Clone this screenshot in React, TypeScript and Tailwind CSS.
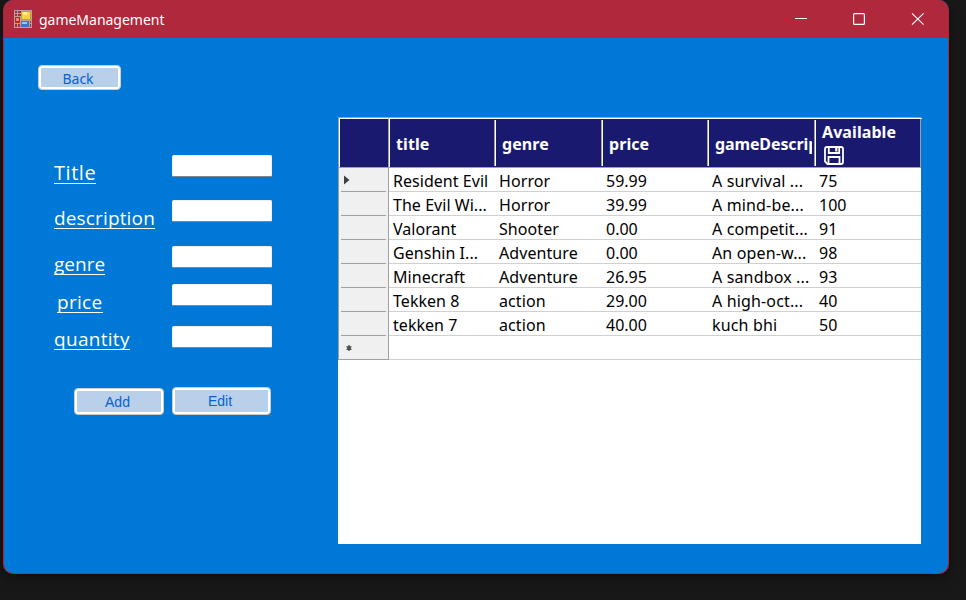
import React from "react";

const rows = [
  ["Resident Evil", "Horror", "59.99", "A survival ...", "75"],
  ["The Evil Wi...", "Horror", "39.99", "A mind-be...", "100"],
  ["Valorant", "Shooter", "0.00", "A competit...", "91"],
  ["Genshin I...", "Adventure", "0.00", "An open-w...", "98"],
  ["Minecraft", "Adventure", "26.95", "A sandbox ...", "93"],
  ["Tekken 8", "action", "29.00", "A high-oct...", "40"],
  ["tekken 7", "action", "40.00", "kuch bhi", "50"],
  ["", "", "", "", ""],
];

const columns = "grid grid-cols-[106px_107px_106px_107px_106px]";

const fields = [
  { label: "Title", row: "h-[45px]", text: "mt-[7px] w-[42px] text-[20px] tracking-[0.55px]", indent: "ml-0" },
  { label: "description", row: "h-[46px]", text: "mt-[7px] w-[101px] text-[19px] tracking-[0.15px]", indent: "ml-0" },
  { label: "genre", row: "h-[38px]", text: "mt-[7px] w-[51px] text-[19px]", indent: "ml-0" },
  { label: "price", row: "h-[42px]", text: "mt-[7px] w-[46px] text-[19px] tracking-[0.3px]", indent: "ml-[3px]" },
  { label: "quantity", row: "h-[61px]", text: "mt-[2px] w-[76px] text-[19px] tracking-[0.3px]", indent: "ml-0" },
];

const cellTracking = ["tracking-[0.04px]", "tracking-[0.08px]", "tracking-normal", "tracking-[0.15px]", "tracking-normal"];

function AppIcon() {
  return (
    <svg width="18" height="18" viewBox="0 0 18 18" shapeRendering="crispEdges">
      <rect width="18" height="18" fill="#b9a0a0" />
      <rect x="1" y="1" width="2" height="2" fill="#b0283b" />
      <rect x="4" y="1" width="3" height="2" fill="#b0283b" />
      <rect x="1" y="4" width="2" height="2" fill="#b0283b" />
      <rect x="4" y="4" width="3" height="2" fill="#b0283b" />
      <rect x="1" y="7" width="5" height="6" fill="#b8271f" />
      <rect x="2" y="8" width="3" height="3" fill="#ee8478" />
      <rect x="7" y="1" width="10" height="9" fill="#d79b18" />
      <rect x="8" y="2" width="8" height="7" fill="#fbd044" />
      <rect x="9" y="2" width="4" height="3" fill="#ffeb9b" />
      <rect x="1" y="14" width="2" height="3" fill="#b0283b" />
      <rect x="4" y="14" width="2" height="3" fill="#b0283b" />
      <rect x="7" y="11" width="8" height="6" fill="#3b75d6" />
      <rect x="8" y="12" width="5" height="2" fill="#9cc5ff" />
      <rect x="16" y="11" width="1" height="2" fill="#b0283b" />
      <rect x="16" y="14" width="1" height="3" fill="#b0283b" />
    </svg>
  );
}

function SaveIcon() {
  return (
    <svg width="20" height="19" viewBox="0 0 20 19" fill="none" stroke="#fff" strokeWidth="1.8">
      <path d="M3 1H17Q19 1 19 3V16Q19 18 17 18H3.5L1 15.5V3Q1 1 3 1Z" />
      <path d="M4.8 1V7H15.2V1" />
      <path d="M4.5 18V11H15.5V18" />
      <path d="M12.3 2V5.5" strokeWidth="2.2" />
    </svg>
  );
}

function FormButton({ children, className }: { children: React.ReactNode; className: string }) {
  return (
    <button
      className={`flex items-center justify-center rounded-[4px] border border-[#d0cdc9] bg-[#b9d0ea] text-[#0862cd] shadow-[inset_0_0_0_2px_#fff] ${className}`}
    >
      {children}
    </button>
  );
}

function HeaderCell({ children, className = "" }: { children: React.ReactNode; className?: string }) {
  return (
    <div className="flex h-[48px] pt-[1px]">
      <div className="h-[48px] w-[104px] shrink-0 overflow-hidden whitespace-nowrap pl-[6px]">
        <div className={`w-[97px] overflow-hidden leading-[48px] ${className}`}>{children}</div>
      </div>
      <div className="ml-auto h-[46px] w-[2px] shrink-0 border-l border-[#a0a0a0] bg-white" />
    </div>
  );
}

export default function App() {
  return (
    <div className="h-[600px] w-[966px] overflow-hidden bg-[#181818] pl-[3px] font-['Noto_Sans','Open_Sans',sans-serif]">
      <div className="flex h-[574px] w-[946px] flex-col overflow-hidden rounded-[10px] border-x border-b border-[#b0283b] bg-[#0078d7] shadow-[0_4px_14px_rgba(0,0,0,0.4)]">
        <header className="flex h-[38px] shrink-0 items-center bg-[#b0283b] pl-[10px] text-white">
          <AppIcon />
          <span className="ml-[7px] mt-[2px] text-[14px] leading-5 tracking-[-0.02px]">gameManagement</span>
          <svg className="ml-auto mr-[22px]" width="132" height="14" viewBox="0 0 132 14" fill="none" stroke="#fff">
            <path d="M1 6.5H13" />
            <rect x="59.6" y="1.6" width="10.8" height="10.8" rx="1" strokeWidth="1.2" />
            <path d="M118 1.3L129.6 12.7M129.6 1.3L118 12.7" strokeWidth="1.1" />
          </svg>
        </header>

        <main className="flex min-h-0 flex-1">
          <section className="w-[334px] shrink-0 pt-[27px]">
            <FormButton className="ml-[34px] h-[25px] w-[83px] pr-[3px] pt-[2px] font-['Noto_Sans'] text-[14px] leading-4">
              Back
            </FormButton>
            <div className="mt-[65px] pl-[50px]">
              {fields.map((f) => (
                <div key={f.label} className={`flex ${f.row}`}>
                  <div className="w-[118px] shrink-0">
                    <div
                      className={`h-[22px] whitespace-nowrap border-b border-[#ffffee] font-['Open_Sans'] font-medium leading-[22px] text-[#ffffee] ${f.text} ${f.indent}`}
                    >
                      {f.label}
                    </div>
                  </div>
                  <input className="h-[22px] w-[100px] rounded-[2px] border border-[#f0f0f0] border-b-[#868686] bg-white outline-none" />
                </div>
              ))}
            </div>
            <div className="flex items-start pl-[70px] font-['Liberation_Sans'] text-[14px]">
              <FormButton className="mt-[1px] h-[27px] w-[90px] pr-[3px] pt-[1px]">Add</FormButton>
              <FormButton className="ml-[8px] h-[28px] w-[99px] pr-[3px]">Edit</FormButton>
            </div>
          </section>

          <section className="mt-[79px] h-[427px] w-[583px] bg-white text-black">
            <div className="flex h-[51px] border border-[#a0a0a0] bg-[#191970] text-[16px] font-bold leading-[23px] tracking-[0.08px] text-white">
              <div className="w-[50px] shrink-0 border-l border-r border-t border-l-white border-r-[#a0a0a0] border-t-white" />
              <div className="-mr-px grid flex-1 grid-cols-[106px_107px_106px_107px_106px] border-l border-t border-white">
                <HeaderCell>title</HeaderCell>
                <HeaderCell>genre</HeaderCell>
                <HeaderCell>price</HeaderCell>
                <HeaderCell className="tracking-[-0.12px]">gameDescription</HeaderCell>
                <div className="flex h-[48px] flex-col pl-[6px] pt-[1px]">
                  <div className="h-[26px] leading-[25px]">Available</div>
                  <div className="h-[19px] pl-[2px]">
                    <SaveIcon />
                  </div>
                </div>
              </div>
            </div>
            {rows.map((row, i) => (
              <div key={i} className="flex h-[24px]">
                <div className="flex w-[51px] shrink-0 flex-col border-x border-[#a0a0a0] bg-[#f0f0f0]">
                  <div className="flex h-[23px] items-center">
                    {i === 0 && (
                      <svg className="ml-[5px]" width="6" height="10" viewBox="0 0 6 10">
                        <path d="M0 0.5L5.5 5L0 9.5Z" fill="#404040" />
                      </svg>
                    )}
                    {i === 7 && (
                      <svg className="ml-[7px]" width="6" height="6" viewBox="0 0 6 6" stroke="#505050">
                        <path d="M3 0V6M0.5 1.5L5.5 4.5M5.5 1.5L0.5 4.5" strokeWidth="1.4" />
                        <circle cx="3" cy="3" r="1.5" fill="#505050" />
                      </svg>
                    )}
                  </div>
                  <div className={i === 7 ? "h-px bg-[#a0a0a0]" : "mx-[2px] h-px bg-[#a0a0a0]"} />
                </div>
                <div className={`flex-1 border-b border-[#d0d0d0] pt-[2px] ${columns}`}>
                  {row.map((cell, j) => (
                    <div
                      key={j}
                      className={`h-[21px] whitespace-nowrap pl-[4px] text-[16px] leading-[22px] ${cellTracking[j]}`}
                    >
                      {cell}
                    </div>
                  ))}
                </div>
              </div>
            ))}
          </section>
        </main>
      </div>
    </div>
  );
}
